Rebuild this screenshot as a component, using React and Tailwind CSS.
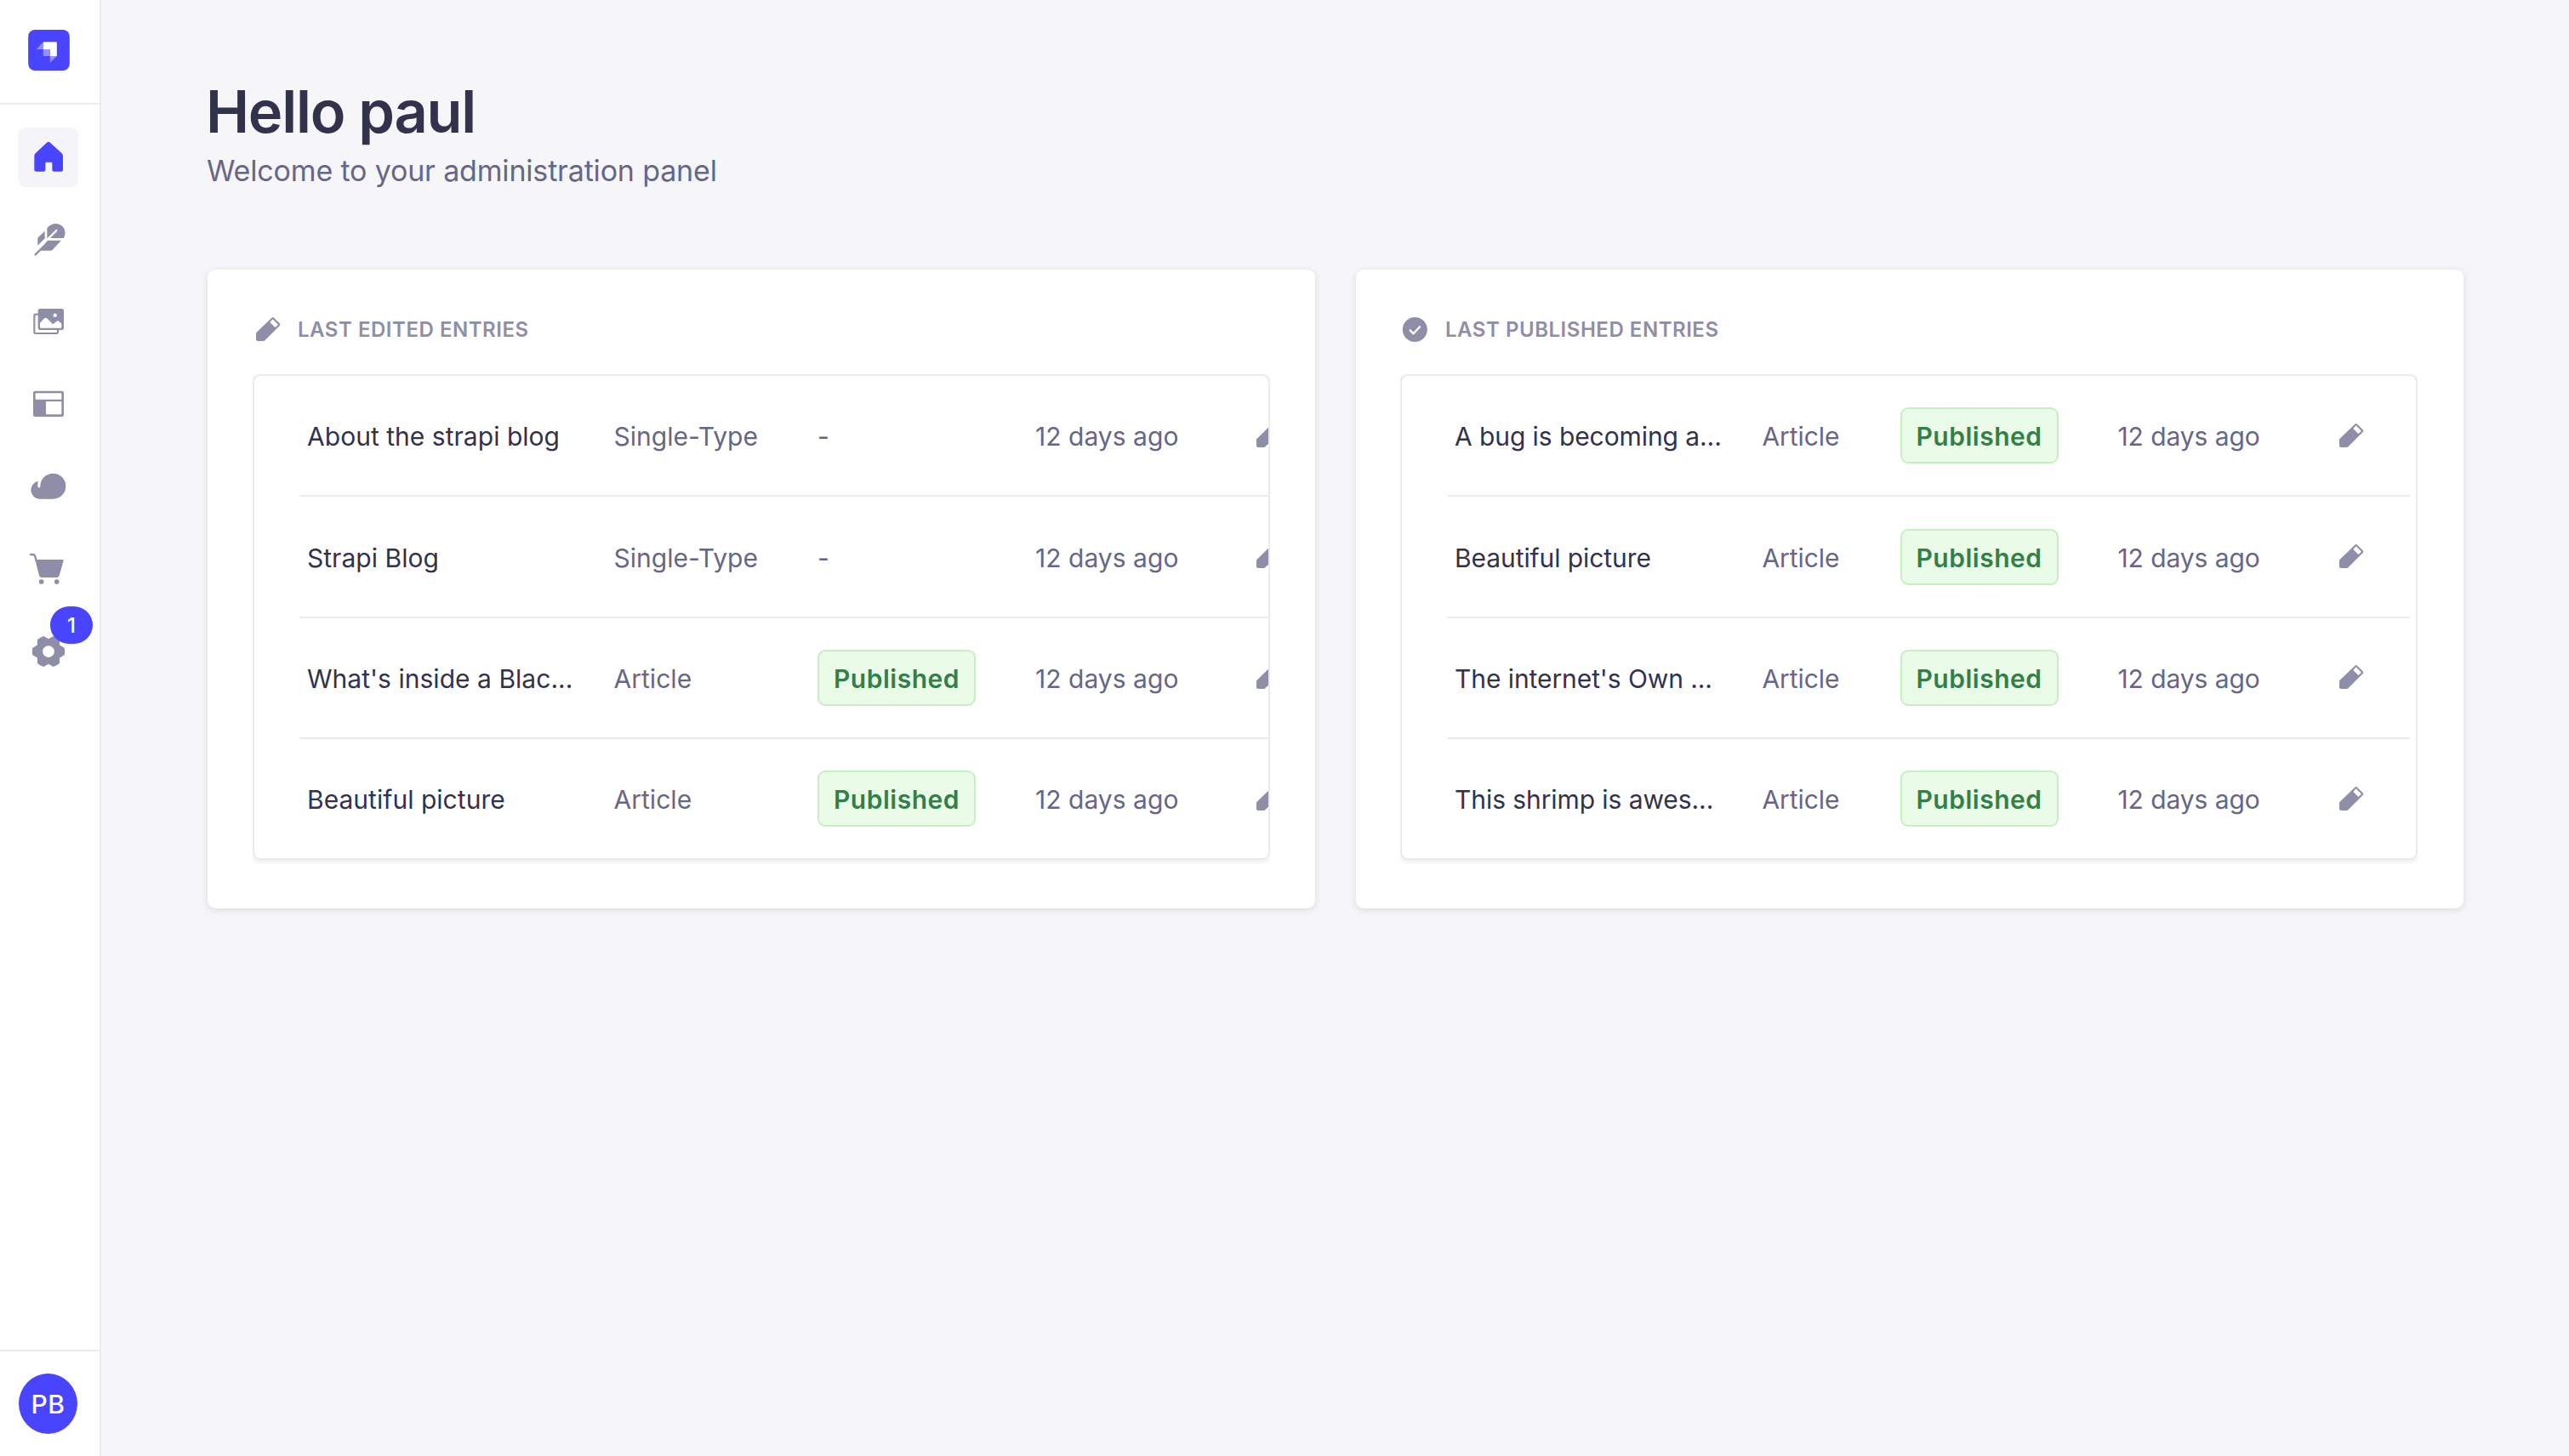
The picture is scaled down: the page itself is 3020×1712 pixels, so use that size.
import { PiGearSixFill } from "react-icons/pi";

const EDITED = [
  { title: "About the strapi blog", type: "Single-Type", published: false },
  { title: "Strapi Blog", type: "Single-Type", published: false },
  { title: "What's inside a Blac...", type: "Article", published: true },
  { title: "Beautiful picture", type: "Article", published: true },
];

const PUBLISHED = [
  { title: "A bug is becoming a...", type: "Article", published: true },
  { title: "Beautiful picture", type: "Article", published: true },
  { title: "The internet's Own ...", type: "Article", published: true },
  { title: "This shrimp is awes...", type: "Article", published: true },
];

/* Sidebar glyphs share a 213×210 grid, three units to a pixel. */
function Glyph({ children }) {
  return (
    <svg viewBox="0 0 213 210" className="h-[70px] w-[71px]" fill="currentColor" aria-hidden="true">
      {children}
    </svg>
  );
}

function HomeIcon() {
  return (
    <Glyph>
      <path d="M102 53q6-5 12 0l41 38q4 4 4 9v49q0 6-6 6h-26q-6 0-6-6v-23q0-4-4-4h-16q-4 0-4 4v23q0 6-6 6H64q-6 0-6-6v-49q0-5 4-9Z" />
    </Glyph>
  );
}

function FeatherIcon() {
  return (
    <Glyph>
      <path d="M95 74v26l-25 25V101q0-3 2-5Z" />
      <path d="M103 98V66q0-3 2-5c12-12 29-17 44-9c17 9 22 28 14 45q-1 2-3 2H103Z" />
      <path d="M104 107h49l-31 33q-3 3-7 3H80Z" />
      <path d="M62 157L108 111" fill="none" stroke="currentColor" strokeWidth="7" strokeLinecap="round" />
      <path d="M102 106L136 72" fill="none" stroke="#fff" strokeWidth="7" strokeLinecap="round" />
    </Glyph>
  );
}

function MediaIcon() {
  return (
    <Glyph>
      <path d="M72 77H62q-4 0-4 4v59q0 4 4 4h75q4 0 4-4V130" fill="none" stroke="currentColor" strokeWidth="6.5" />
      <rect x="71" y="57" width="91" height="75" rx="7" />
      <path d="M78 107l14-15q6-6 12 0l20 20 12-10q5-4 10 0l8 8v12q0 3-3 3H81q-3 0-3-3Z" fill="#fff" />
      <circle cx="131" cy="80" r="6.5" fill="#fff" />
    </Glyph>
  );
}

function LayoutIcon() {
  return (
    <Glyph>
      <rect x="54" y="59" width="108" height="91" rx="7" />
      <path d="M62 67h92v22H62zM99 96h55v46H99z" fill="#fff" />
    </Glyph>
  );
}

function CloudIcon() {
  return (
    <Glyph>
      <path d="M124 59a45 45 0 1 1 0 90H76A31.500 31.500 0 0 1 72 86.500c-2 6-2 12-2 18q0 5 4.500 5t4.500-5C79 78 99 59 124 59Z" />
    </Glyph>
  );
}

function CartIcon() {
  return (
    <Glyph>
      <path d="M45 54h7q7 0 9 7l3 12" fill="none" stroke="currentColor" strokeWidth="7" strokeLinecap="round" />
      <path d="M61 72h97q4 0 3 4l-15 52q-2 7-9 7H84q-7 0-9-7Z" />
      <circle cx="83" cy="150" r="8.500" />
      <circle cx="137" cy="150" r="8.500" />
    </Glyph>
  );
}

function PencilIcon() {
  return (
    <svg viewBox="0 0 105 105" className="h-[35px] w-[35px] shrink-0 text-[#8e8ea9]" fill="currentColor" aria-hidden="true">
      <path
        fillRule="evenodd"
        d="M67 11q4-4 8 0l20 20q4 4 0 8L43 91q-2 2-5 2H18q-6 0-6-6V67q0-3 2-5ZM71 16L61 27l18 18 11-10Z"
      />
    </svg>
  );
}

function CheckIcon() {
  return (
    <svg viewBox="0 0 105 105" className="h-[35px] w-[35px] shrink-0 text-[#8e8ea9]" aria-hidden="true">
      <circle cx="52" cy="52.500" r="43.500" fill="currentColor" />
      <path d="M35 55l12 12 22-24" fill="none" stroke="#fff" strokeWidth="7" strokeLinecap="round" strokeLinejoin="round" />
    </svg>
  );
}

function Logo() {
  return (
    <svg viewBox="0 0 146 144" className="h-12 w-[49px]" aria-label="Strapi">
      <rect width="146" height="144" rx="24" fill="#4945ff" />
      <path d="M53 43h46q2 0 2 2v48H77V71q0-2-2-2H53Z" fill="#fff" />
      <path d="M53 69h22q2 0 2 2v22H55q-2 0-2-2Z" fill="#9593ff" />
      <path d="M53 43v26H29ZM77 93h24L77 116Z" fill="#9593ff" />
    </svg>
  );
}

const NAV = [
  { name: "Home", icon: <HomeIcon />, active: true },
  { name: "Content Manager", icon: <FeatherIcon /> },
  { name: "Media Library", icon: <MediaIcon /> },
  { name: "Content-Type Builder", icon: <LayoutIcon /> },
  { name: "Deploy", icon: <CloudIcon /> },
  { name: "Marketplace", icon: <CartIcon /> },
  { name: "Settings", icon: <PiGearSixFill className="size-[44px]" />, badge: 1 },
];

function Sidebar() {
  return (
    <aside className="flex w-[119px] shrink-0 flex-col border-r-2 border-[#eaeaef] bg-white">
      <div className="flex h-[123px] items-start border-b-2 border-[#eaeaef] pt-[35px] pl-[33px]">
        <Logo />
      </div>
      <nav className="flex flex-1 flex-col gap-[26.8px] pt-[27px] pl-[21px]">
        {NAV.map((item) => (
          <a
            key={item.name}
            aria-label={item.name}
            className={
              item.active
                ? "relative flex h-[70px] w-[71px] items-center justify-center rounded-[9px] bg-[#f4f4f9] text-[#4945ff]"
                : "relative flex h-[70px] w-[71px] items-center justify-center rounded-[9px] text-[#8e8ea9]"
            }
          >
            {item.icon}
            {item.badge && (
              <span className="absolute -top-[18px] left-[38px] flex h-11 w-[50px] items-center justify-center rounded-full bg-[#4945ff] pt-0.5 text-[24px] font-medium text-white">
                {item.badge}
              </span>
            )}
          </a>
        ))}
      </nav>
      <div className="flex h-[125px] items-start border-t-2 border-[#eaeaef] pt-[26px] pl-[22px]">
        <div className="flex h-[71px] w-[69px] items-center justify-center rounded-[50%] bg-[#4945ff] pt-0.5 text-[30px] font-medium tracking-[0.5px] text-white">
          PB
        </div>
      </div>
    </aside>
  );
}

function Status({ published }) {
  if (!published) return <span className="pt-0.5 text-[#666687]">-</span>;
  return (
    <span className="flex h-[66px] w-[186px] items-center justify-center rounded-[9px] border-2 border-[#c6f0c2] bg-[#eafbe7] pt-0.5 font-semibold tracking-[0.5px] text-[#328048]">
      Published
    </span>
  );
}

function EntriesCard({ icon, title, rows, cardClass, rowClass }) {
  return (
    <section className={cardClass}>
      <h2 className="flex h-[35px] items-center gap-[18px] text-[24px] font-semibold tracking-[0.53px] text-[#8e8ea9]">
        {icon}
        {title}
      </h2>
      <div className="mt-[35px] overflow-hidden pb-[5px]">
        <div className="overflow-hidden rounded-[9px] border-2 border-[#eaeaef] bg-white pl-[53px] shadow-[0_2px_9px_rgba(33,33,52,0.1)]">
          {rows.map((row, i) => (
            <div key={i} className={rowClass}>
              <span className="pt-0.5 whitespace-nowrap text-[#32324d]">{row.title}</span>
              <span className="pt-0.5 text-[#666687]">{row.type}</span>
              <Status published={row.published} />
              <span className="pt-0.5 text-[#666687]">12 days ago</span>
              <PencilIcon />
            </div>
          ))}
        </div>
      </div>
    </section>
  );
}

export default function App() {
  return (
    <div className="flex h-screen overflow-hidden bg-[#f6f6f9] font-['Inter',sans-serif]">
      <Sidebar />
      <main className="min-w-0 flex-1 pt-[88px] pr-[124px] pl-[125px]">
        <h1 className="-ml-0.5 text-[68.5px] leading-[88px] font-semibold tracking-[-1.2px] text-[#32324d]">
          Hello paul
        </h1>
        <p className="-ml-px text-[34px] leading-[50px] tracking-[-0.17px] text-[#666687]">
          Welcome to your administration panel
        </p>
        <div className="mt-[91px] grid grid-cols-2 items-start gap-12">
          <EntriesCard
            icon={<PencilIcon />}
            title="LAST EDITED ENTRIES"
            rows={EDITED}
            cardClass="min-w-0 rounded-[9px] bg-white px-[53px] pt-[53px] pb-[52px] shadow-[0_2px_9px_rgba(33,33,52,0.12)]"
            rowClass="grid h-[142.4px] w-[1192px] grid-cols-[360.5px_239.5px_256px_256px_35px] items-center border-b-2 border-[#eaeaef] pl-[9px] text-[30px] leading-[44px] tracking-[0.03px] last:h-[140px] last:border-b-0"
          />
          <EntriesCard
            icon={<CheckIcon />}
            title="LAST PUBLISHED ENTRIES"
            rows={PUBLISHED}
            cardClass="min-w-0 rounded-[9px] bg-white pr-[54px] pl-[52px] pt-[53px] pb-[52px] shadow-[0_2px_9px_rgba(33,33,52,0.12)]"
            rowClass="grid h-[142.4px] w-[1132px] grid-cols-[361.5px_162px_256px_256px_35px] items-center border-b-2 border-[#eaeaef] pl-[9px] text-[30px] leading-[44px] tracking-[-0.08px] last:h-[140px] last:border-b-0"
          />
        </div>
      </main>
    </div>
  );
}
